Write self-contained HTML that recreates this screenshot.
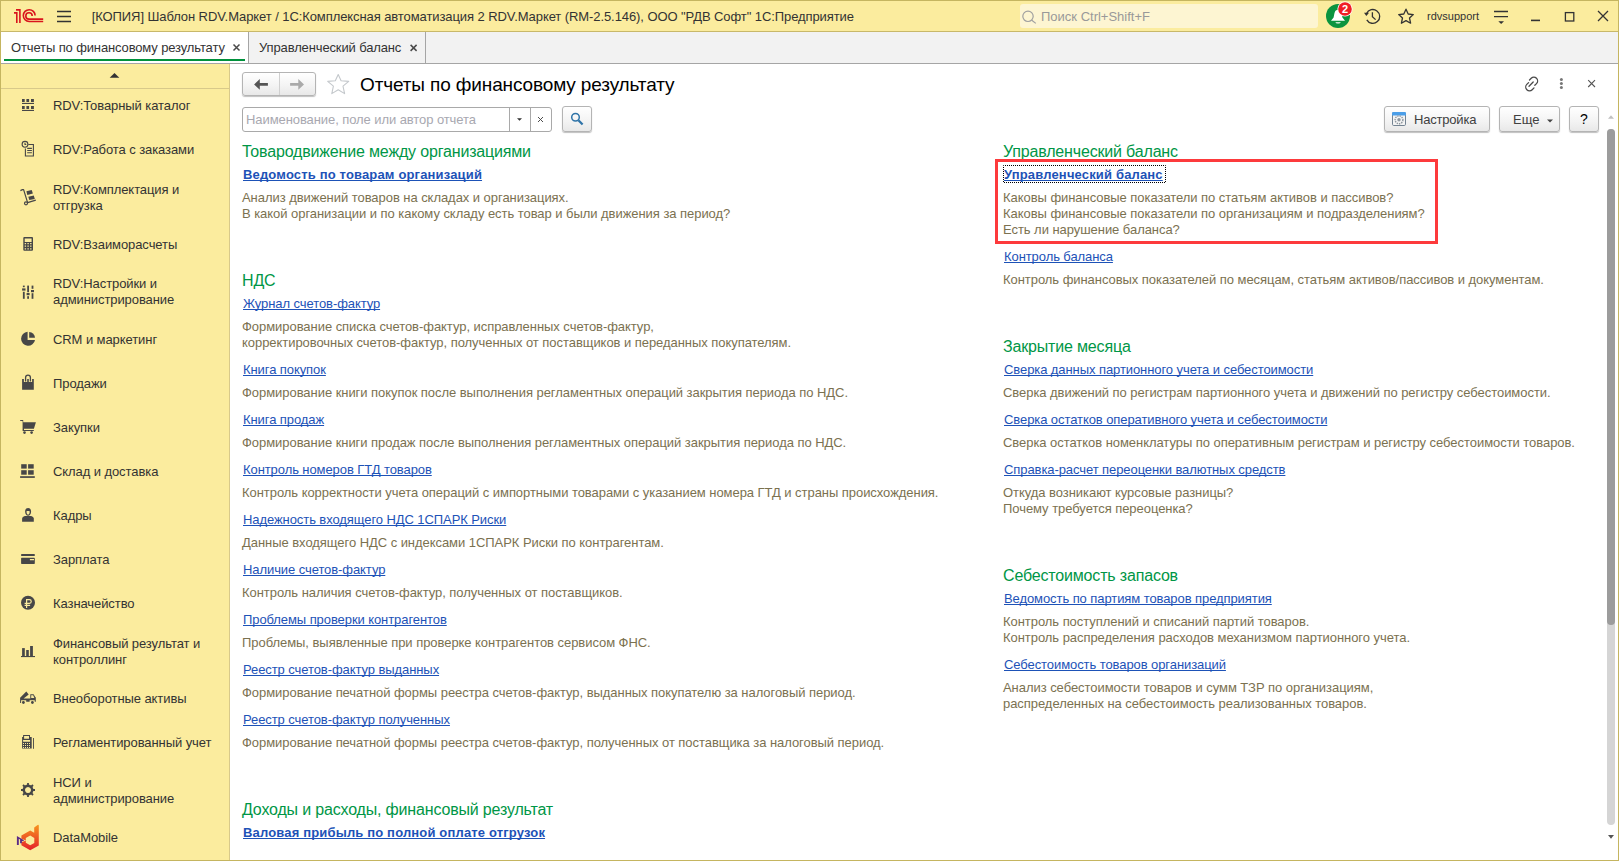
<!DOCTYPE html>
<html><head><meta charset="utf-8">
<style>
*{box-sizing:border-box;margin:0;padding:0}
html,body{width:1619px;height:861px;overflow:hidden;background:#fff}
body{position:relative;font-family:"Liberation Sans",sans-serif;font-size:13px;color:#333}
.a{position:absolute}
.t{position:absolute;white-space:nowrap;line-height:16px}
#frame{left:0;top:0;width:1619px;height:861px;border:1px solid #c5b560}
#titlebar{left:1px;top:1px;width:1617px;height:31px;background:#fbec9e;border-bottom:1px solid #c8b86a}
#tabbar{left:1px;top:32px;width:1617px;height:32px;background:#f2f2f2;border-bottom:1px solid #a5a5a5}
#sidebar{left:1px;top:64px;width:229px;height:796px;background:#fbec9e;border-right:1px solid #d8c98a}
#content{left:230px;top:64px;width:1388px;height:796px;background:#fff}
.side{color:#333;letter-spacing:-0.08px;left:53px}
.h{color:#009646;font-size:16px;line-height:20px;letter-spacing:-0.17px}
.lk{color:#1d52b7;text-decoration:underline;text-decoration-skip-ink:none;letter-spacing:-0.08px}
.lkb{color:#1d52b7;text-decoration:underline;text-decoration-skip-ink:none;font-weight:bold;letter-spacing:0.16px}
.d{color:#7b7150;letter-spacing:-0.05px}
.btn{position:absolute;border:1px solid #b4b4b4;border-radius:3px;background:linear-gradient(#fff,#f3f3f3 60%,#e8e8e8);box-shadow:0 1px 1px rgba(0,0,0,.25)}
</style></head><body>
<div class="a" id="titlebar"></div>
<div class="a" id="tabbar"></div>
<div class="a" id="sidebar"></div>
<div class="a" id="content"></div>
<div class="a" id="frame"></div>

<!-- title bar -->
<div class="t" style="left:91.7px;top:9px;letter-spacing:-0.085px;color:#333">[КОПИЯ] Шаблон RDV.Маркет / 1С:Комплексная автоматизация 2 RDV.Маркет (RM-2.5.146), ООО "РДВ Софт" 1С:Предприятие</div>
<div class="a" style="left:1020px;top:4px;width:298px;height:24px;background:#fdf5d2;border-radius:3px"></div>
<div class="t" style="left:1041px;top:9px;color:#999">Поиск Ctrl+Shift+F</div>
<div class="t" style="left:1427px;top:9px;font-size:11px;line-height:14px;color:#333">rdvsupport</div>

<!-- tabs -->
<div class="a" style="left:1px;top:32px;width:248px;height:31px;background:#fff;border-right:1px solid #a5a5a5"></div>
<div class="a" style="left:4px;top:59px;width:241px;height:2px;background:#00913c"></div>
<div class="t" style="left:11px;top:40px;letter-spacing:-0.13px;color:#333">Отчеты по финансовому результату</div>
<div class="a" style="left:249px;top:32px;width:177px;height:31px;border-right:1px solid #a5a5a5"></div>
<div class="t" style="left:259px;top:40px;letter-spacing:-0.13px;color:#333">Управленческий баланс</div>

<!-- sidebar -->
<div class="a" style="left:1px;top:88px;width:228px;height:1px;background:#d8c98a"></div>
<div class="t side" style="top:98px">RDV:Товарный каталог</div>
<div class="t side" style="top:142px">RDV:Работа с заказами</div>
<div class="t side" style="top:182px">RDV:Комплектация и<br>отгрузка</div>
<div class="t side" style="top:237px">RDV:Взаиморасчеты</div>
<div class="t side" style="top:276px">RDV:Настройки и<br>администрирование</div>
<div class="t side" style="top:332px">CRM и маркетинг</div>
<div class="t side" style="top:376px">Продажи</div>
<div class="t side" style="top:420px">Закупки</div>
<div class="t side" style="top:464px">Склад и доставка</div>
<div class="t side" style="top:508px">Кадры</div>
<div class="t side" style="top:552px">Зарплата</div>
<div class="t side" style="top:596px">Казначейство</div>
<div class="t side" style="top:636px">Финансовый результат и<br>контроллинг</div>
<div class="t side" style="top:691px">Внеоборотные активы</div>
<div class="t side" style="top:735px">Регламентированный учет</div>
<div class="t side" style="top:775px">НСИ и<br>администрирование</div>
<div class="t side" style="top:830px">DataMobile</div>

<!-- content header -->
<div class="t" style="left:360px;top:73px;font-size:19px;line-height:24px;letter-spacing:-0.13px;color:#000">Отчеты по финансовому результату</div>
<div class="btn" style="left:242px;top:72px;width:74px;height:24px"></div>
<div class="a" style="left:279px;top:73px;width:1px;height:22px;background:#d0d0d0"></div>
<div class="a" style="left:242px;top:107px;width:310px;height:25px;border:1px solid #a9a9a9;border-radius:3px;background:#fff"></div>
<div class="a" style="left:509px;top:108px;width:1px;height:23px;background:#a9a9a9"></div>
<div class="a" style="left:530px;top:108px;width:1px;height:23px;background:#a9a9a9"></div>
<div class="t" style="left:246px;top:112px;color:#a8a8b0;letter-spacing:-0.08px">Наименование, поле или автор отчета</div>
<div class="btn" style="left:562px;top:106px;width:30px;height:26px"></div>
<div class="btn" style="left:1384px;top:106px;width:106px;height:26px"></div>
<div class="t" style="left:1414px;top:112px;color:#404040;letter-spacing:-0.2px">Настройка</div>
<div class="btn" style="left:1499px;top:106px;width:61px;height:26px"></div>
<div class="t" style="left:1513px;top:112px;color:#404040">Еще</div>
<div class="btn" style="left:1569px;top:106px;width:30px;height:26px"></div>
<div class="t" style="left:1580px;top:111px;color:#000;font-size:14px">?</div>

<!-- left column -->
<div class="t h" style="left:242px;top:142px">Товародвижение между организациями</div>
<div class="t lkb" style="left:243px;top:167px">Ведомость по товарам организаций</div>
<div class="t d" style="left:242px;top:190px">Анализ движений товаров на складах и организациях.<br>В какой организации и по какому складу есть товар и были движения за период?</div>

<div class="t h" style="left:242px;top:271px">НДС</div>
<div class="t lk" style="left:243px;top:296px">Журнал счетов-фактур</div>
<div class="t d" style="left:242px;top:319px">Формирование списка счетов-фактур, исправленных счетов-фактур,<br>корректировочных счетов-фактур, полученных от поставщиков и переданных покупателям.</div>
<div class="t lk" style="left:243px;top:362px">Книга покупок</div>
<div class="t d" style="left:242px;top:385px">Формирование книги покупок после выполнения регламентных операций закрытия периода по НДС.</div>
<div class="t lk" style="left:243px;top:412px">Книга продаж</div>
<div class="t d" style="left:242px;top:435px">Формирование книги продаж после выполнения регламентных операций закрытия периода по НДС.</div>
<div class="t lk" style="left:243px;top:462px">Контроль номеров ГТД товаров</div>
<div class="t d" style="left:242px;top:485px">Контроль корректности учета операций с импортными товарами с указанием номера ГТД и страны происхождения.</div>
<div class="t lk" style="left:243px;top:512px">Надежность входящего НДС 1СПАРК Риски</div>
<div class="t d" style="left:242px;top:535px">Данные входящего НДС с индексами 1СПАРК Риски по контрагентам.</div>
<div class="t lk" style="left:243px;top:562px">Наличие счетов-фактур</div>
<div class="t d" style="left:242px;top:585px">Контроль наличия счетов-фактур, полученных от поставщиков.</div>
<div class="t lk" style="left:243px;top:612px">Проблемы проверки контрагентов</div>
<div class="t d" style="left:242px;top:635px">Проблемы, выявленные при проверке контрагентов сервисом ФНС.</div>
<div class="t lk" style="left:243px;top:662px">Реестр счетов-фактур выданных</div>
<div class="t d" style="left:242px;top:685px">Формирование печатной формы реестра счетов-фактур, выданных покупателю за налоговый период.</div>
<div class="t lk" style="left:243px;top:712px">Реестр счетов-фактур полученных</div>
<div class="t d" style="left:242px;top:735px">Формирование печатной формы реестра счетов-фактур, полученных от поставщика за налоговый период.</div>

<div class="t h" style="left:242px;top:800px">Доходы и расходы, финансовый результат</div>
<div class="t lkb" style="left:243px;top:825px">Валовая прибыль по полной оплате отгрузок</div>

<!-- right column -->
<div class="t h" style="left:1003px;top:142px">Управленческий баланс</div>
<div class="t lkb" style="left:1004px;top:167px">Управленческий баланс</div>
<div class="t d" style="left:1003px;top:190px">Каковы финансовые показатели по статьям активов и пассивов?<br>Каковы финансовые показатели по организациям и подразделениям?<br>Есть ли нарушение баланса?</div>
<div class="t lk" style="left:1004px;top:249px">Контроль баланса</div>
<div class="t d" style="left:1003px;top:272px">Контроль финансовых показателей по месяцам, статьям активов/пассивов и документам.</div>

<div class="t h" style="left:1003px;top:337px">Закрытие месяца</div>
<div class="t lk" style="left:1004px;top:362px">Сверка данных партионного учета и себестоимости</div>
<div class="t d" style="left:1003px;top:385px">Сверка движений по регистрам партионного учета и движений по регистру себестоимости.</div>
<div class="t lk" style="left:1004px;top:412px">Сверка остатков оперативного учета и себестоимости</div>
<div class="t d" style="left:1003px;top:435px">Сверка остатков номенклатуры по оперативным регистрам и регистру себестоимости товаров.</div>
<div class="t lk" style="left:1004px;top:462px">Справка-расчет переоценки валютных средств</div>
<div class="t d" style="left:1003px;top:485px">Откуда возникают курсовые разницы?<br>Почему требуется переоценка?</div>

<div class="t h" style="left:1003px;top:566px">Себестоимость запасов</div>
<div class="t lk" style="left:1004px;top:591px">Ведомость по партиям товаров предприятия</div>
<div class="t d" style="left:1003px;top:614px">Контроль поступлений и списаний партий товаров.<br>Контроль распределения расходов механизмом партионного учета.</div>
<div class="t lk" style="left:1004px;top:657px">Себестоимость товаров организаций</div>
<div class="t d" style="left:1003px;top:680px">Анализ себестоимости товаров и сумм ТЗР по организациям,<br>распределенных на себестоимость реализованных товаров.</div>

<!-- red highlight box -->
<div class="a" style="left:995px;top:159px;width:443px;height:85px;border:3px solid #fd3a3c"></div>

<!-- scrollbar -->
<div class="a" style="left:1607px;top:129px;width:8px;height:696px;background:#d5d5d5;border-radius:4px"></div>
<div class="a" style="left:1607px;top:129px;width:8px;height:496px;background:#9c9c9c;border-radius:4px"></div>

<svg class="a" style="left:0;top:0" width="1619" height="861" viewBox="0 0 1619 861">
<!-- 1C logo -->
<g fill="none" stroke="#d9141c" stroke-width="1.6">
<path d="M14,12.9 H17 M16.8,12.1 V22.9 M16,9.9 H20.7 M19.9,9.2 V22.9"/>
<path d="M35.1,15.6 A5.9,5.9 0 1 0 29.2,21.5 H43.2"/>
<path d="M32.2,15.9 A3.2,3.2 0 1 0 29,19.1 H43.2"/>
</g>
<!-- hamburger -->
<g stroke="#333" stroke-width="1.5"><path d="M57,11.5 H71 M57,16.5 H71 M57,21.5 H71"/></g>
<!-- search magnifier in title -->
<g fill="none" stroke="#a0a0a0" stroke-width="1.2"><circle cx="1028" cy="16.3" r="5.2"/><path d="M1031.8,20.2 L1035.8,23.4"/></g>
<!-- bell -->
<circle cx="1338" cy="16" r="12" fill="#0b943f"/>
<path d="M1337.2,10 C1335.6,10 1334.8,11.6 1334.4,13.6 L1333.6,17.4 L1331,20.8 H1345 L1342.4,17.4 L1341.6,13.6 C1341.2,11.6 1339,10 1337.2,10 Z" fill="#fff"/>
<path d="M1335.3,22.3 H1340.8 A2.8,1.6 0 0 1 1335.3,22.3 Z" fill="#fff"/>
<circle cx="1345" cy="9" r="7.6" fill="#fff"/>
<circle cx="1345" cy="9" r="6.8" fill="#f01d25"/>
<text x="1345" y="13" font-family="Liberation Sans" font-size="11" font-weight="bold" fill="#fff" text-anchor="middle">2</text>
<!-- history -->
<g fill="none" stroke="#333" stroke-width="1.3">
<path d="M1366.55,13.5 A6.9,6.9 0 1 1 1366.8,19.85"/>
<path d="M1372.4,12.2 V16.6 L1375.6,19.6"/>
</g>
<path d="M1364,12.8 L1369,12.8 L1366.4,16 Z" fill="#333"/>
<!-- star title -->
<path d="M1406,9.2 L1408.2,14 L1413.3,14.6 L1409.5,18 L1410.6,23.2 L1406,20.6 L1401.4,23.2 L1402.5,18 L1398.7,14.6 L1403.8,14 Z" fill="none" stroke="#333" stroke-width="1.3" stroke-linejoin="round"/>
<!-- filter -->
<g stroke="#333" stroke-width="1.3"><path d="M1494,11.5 H1508 M1494,16.6 H1508"/></g>
<path d="M1498.3,21.2 H1504 L1501.15,24 Z" fill="#333"/>
<!-- window controls -->
<path d="M1531,20.4 H1540" stroke="#333" stroke-width="1.6"/>
<rect x="1565.4" y="12.6" width="8.4" height="8.4" fill="none" stroke="#333" stroke-width="1.3"/>
<path d="M1598,11 L1608,21 M1608,11 L1598,21" stroke="#333" stroke-width="1.3"/>
<!-- tab close -->
<path d="M233.5,44.5 L239.5,50.5 M239.5,44.5 L233.5,50.5" stroke="#4a4a4a" stroke-width="1.5"/>
<path d="M410.6,44.9 L416.6,50.9 M416.6,44.9 L410.6,50.9" stroke="#4a4a4a" stroke-width="1.5"/>
<!-- sidebar up arrow -->
<path d="M109.7,77.8 H119.3 L114.5,73 Z" fill="#333"/>

<g fill="#474747">
<!-- 1 grid -->
<rect x="22" y="99" width="2.7" height="3"/><rect x="26.4" y="99" width="2.7" height="3"/><rect x="31" y="99" width="2.9" height="3"/>
<rect x="22" y="102.9" width="12" height="1.1"/>
<rect x="22" y="106" width="2.7" height="3"/><rect x="26.4" y="106" width="2.7" height="3"/><rect x="31" y="106" width="2.9" height="3"/>
<rect x="22" y="109.9" width="12" height="1.1"/>
<!-- 4 calculator -->
<path fill-rule="evenodd" d="M24.3,237 H32 Q33,237 33,238 V249.8 Q33,250.8 32,250.8 H24.3 Q23.3,250.8 23.3,249.8 V238 Q23.3,237 24.3,237 Z M24.7,238.4 V241.9 H31.6 V238.4 Z M24.7,243 h1.4 v1.2 h-1.4 Z M27.4,243 h1.4 v1.2 h-1.4 Z M30.1,243 h1.4 v1.2 h-1.4 Z M24.7,245.6 h1.4 v1.2 h-1.4 Z M27.4,245.6 h1.4 v1.2 h-1.4 Z M30.1,245.6 h1.4 v1.2 h-1.4 Z M24.7,248.2 h1.4 v1.2 h-1.4 Z M27.4,248.2 h1.4 v1.2 h-1.4 Z M30.1,248.2 h1.4 v1.2 h-1.4 Z"/>
<!-- 5 sliders -->
<rect x="22.9" y="285.6" width="1.8" height="1.6"/><rect x="22.1" y="288.4" width="3.4" height="2.2"/><rect x="22.9" y="291.8" width="1.8" height="7"/>
<rect x="27.2" y="285.6" width="1.8" height="6.6"/><rect x="26.6" y="293" width="3" height="2.2"/><rect x="27.2" y="296.2" width="1.8" height="2.6"/>
<rect x="31.6" y="285.6" width="1.8" height="3.2"/><rect x="31" y="290" width="3" height="2.2"/><rect x="31.6" y="293.2" width="1.8" height="5.6"/>
<!-- 6 pie -->
<path d="M27.6,339.9 V331.85 A7,7 0 1 0 35,339.9 Z"/>
<path d="M29.2,337.8 V331.9 A5.9,5.9 0 0 1 35,337.8 Z"/>
<!-- 7 bag -->
<path d="M22.1,379 H23.9 V382 H27.2 V379 H28.8 V382 H32.1 V379 H33.8 V389.8 H22.1 Z"/>
<path d="M25.6,381.5 V377.6 A2.4,2.4 0 0 1 30.4,377.6 V381.5" fill="none" stroke="#474747" stroke-width="1.3"/>
<!-- 8 cart -->
<path d="M20.2,420 H23.2 V422.3 H35.9 L33.9,428.8 H24 V430 H33.8 V431.1 H22.6 V421.1 H20.2 Z"/>
<circle cx="24.5" cy="432.6" r="1.3"/><circle cx="31.6" cy="432.6" r="1.3"/>
<!-- 9 warehouse -->
<rect x="21.2" y="464.2" width="5.5" height="4.4"/><rect x="28.1" y="464.2" width="5.6" height="4.4"/>
<rect x="21.2" y="470.2" width="5.5" height="4.5"/><rect x="28.1" y="470.2" width="5.6" height="4.5"/>
<rect x="20.1" y="476.2" width="14.7" height="1.7"/>
<!-- 10 person -->
<path fill-rule="evenodd" d="M28.1,508 C30.2,508 31.1,509.6 31.1,511.6 C31.1,514 29.8,515.8 28.1,515.8 C26.4,515.8 25.1,514 25.1,511.6 C25.1,509.6 26,508 28.1,508 Z M26.5,511.2 C26.5,513.4 27.2,514.6 28.1,514.6 C29,514.6 29.7,513.4 29.7,511.2 C28.6,511 27.6,510.6 26.5,511.2 Z"/>
<path d="M22.1,521.8 V518.6 Q22.2,516.6 24.8,516.1 H31.2 Q33.7,516.6 33.8,518.6 V521.8 Z"/>
<!-- 11 card -->
<rect x="21.1" y="554" width="13.7" height="2" rx="0.6"/>
<path fill-rule="evenodd" d="M21.7,557.8 H34.2 Q34.8,557.8 34.8,558.4 V563.3 Q34.8,563.9 34.2,563.9 H21.7 Q21.1,563.9 21.1,563.3 V558.4 Q21.1,557.8 21.7,557.8 Z M29.9,559 V560.2 H34 V559 Z"/>
<!-- 12 ruble -->
<circle cx="28" cy="602.8" r="7"/>
<!-- 13 bars -->
<rect x="22.1" y="648.1" width="2.7" height="8.1"/><rect x="26.2" y="650" width="2.6" height="6.2"/><rect x="30.1" y="646" width="2.8" height="10.2"/>
<rect x="21" y="656" width="14" height="1.1"/>
<!-- 14 truck -->
<path d="M20.1,697.8 L26.3,691.4 L28.7,694.6 L23.6,698.4 H30.3 V694.2 H33.6 L35.1,696.8 L35.8,697.4 V701.8 H34.7 V700.3 H29.6 V701.7 H26.2 V700.3 H21.1 V703 H20.1 Z"/>
<circle cx="23.4" cy="702.5" r="1.4"/><circle cx="32.4" cy="702.5" r="1.4"/>
<path d="M31.2,695.2 H33.2 L34.3,697.9 H31.2 Z" fill="#fbec9e"/>
<!-- 15 fiscal -->
<path fill-rule="evenodd" d="M23.1,735 H30 V737 H31.7 V748.6 H22.1 V737 H23.1 Z M24.1,736 V738.8 H29 V736 Z M23.1,740 V741.8 H30.1 V740 Z M23,743 h1 v1 h-1 Z M25,743 h1 v1 h-1 Z M27,743 h1 v1 h-1 Z M29,743 h1 v1 h-1 Z M23,745 h1 v1 h-1 Z M25,745 h1 v1 h-1 Z M27,745 h1 v1 h-1 Z M29,745 h1 v1 h-1 Z M23,747 h1 v1 h-1 Z M25,747 h1 v1 h-1 Z M27,747 h1 v1 h-1 Z M29,747 h1 v1 h-1 Z"/>
<rect x="33" y="738" width="0.9" height="10.8"/>
<!-- 16 gear -->
<path fill-rule="evenodd" d="M28,784.6 A5.4,5.4 0 1 1 27.99,784.6 Z M28,787 A3,3 0 1 0 28.01,787 Z"/>
<g stroke="#474747" stroke-width="1.8">
<path d="M28,783 V786 M28,794 V797 M21,790 H24 M32,790 H35 M23,785 L25,787 M31,793 L33,795 M33,785 L31,787 M25,793 L23,795"/>
</g>
</g>
<!-- ruble glyph -->
<path d="M26.6,608 V599.6 H29.4 A1.8,1.8 0 0 1 29.4,603.3 H24.6 M24.6,605.4 H30.1" fill="none" stroke="#fbec9e" stroke-width="1.2"/>
<!-- 2 clock doc -->
<g fill="none" stroke="#474747" stroke-width="1.1">
<circle cx="25" cy="144.3" r="2.9"/>
<path d="M25,142.8 V144.5 H26.3"/>
<path d="M28.3,144.5 H33.4 V156 H25.4 V148.6"/>
<path d="M27.2,148.4 H31.9 M27.2,150.5 H31.9 M27.2,152.8 H31.9"/>
</g>
<!-- 3 hand truck -->
<g fill="none" stroke="#474747" stroke-width="1.2" stroke-linejoin="round">
<path d="M20.4,190.6 L22.4,189.6 H23.6 L27.6,202.6 L35.8,200.2"/>
<circle cx="26" cy="203.3" r="1.5"/>
</g>
<g fill="#474747">
<path d="M26.4,191.3 L31.7,190 L32.9,193.6 L27.3,194.9 Z"/>
<path d="M28.3,196.7 L33.8,195.4 L34.8,198.9 L29.3,200.1 Z"/>
</g>
<!-- DataMobile -->
<defs><linearGradient id="dmg" x1="0" y1="0" x2="0" y2="1"><stop offset="0" stop-color="#f7941d"/><stop offset="1" stop-color="#e4202a"/></linearGradient></defs>
<path fill="url(#dmg)" fill-rule="evenodd" d="M21.4,835.6 L30.2,830.5 L34.2,832.8 V827.4 L37.6,824.9 Q38.8,824.5 38.8,825.8 V845.6 L30.2,850.3 L21.4,845.3 Z M25.8,837.9 V842.8 L30.2,845.3 L34.3,842.9 V837.9 L30.2,835.5 Z"/>
<path d="M20.6,838.6 L26.2,840.4 L20.6,842.4 Z" fill="#fbec9e"/>
<path d="M16.9,835.9 L24.4,840.4 L21.9,841.3 V843.2 H20.1 V839.5 L18.8,838.7 V844.9 H16.9 Z" fill="#5b2b86"/>
<!-- nav arrows -->
<path d="M254.1,84.4 L259.8,79.1 V83 H267.9 V85.8 H259.8 V89.8 Z" fill="#555"/>
<path d="M304,84.4 L298.3,79.1 V83 H290.1 V85.8 H298.3 V89.8 Z" fill="#aaa"/>
<!-- content star -->
<path d="M338.2,74.5 L341.1,80.7 L348.7,81.4 L343,86.2 L344.6,93.6 L338.2,89.7 L331.8,93.6 L333.4,86.2 L327.7,81.4 L335.3,80.7 Z" fill="none" stroke="#c4c8cc" stroke-width="1.1" stroke-linejoin="round"/>
<!-- search field icons -->
<path d="M517,118.2 H522 L519.5,120.8 Z" fill="#333"/>
<path d="M538,117 L543,122 M543,117 L538,122" stroke="#444" stroke-width="0.95"/>
<g fill="none" stroke="#2f74a8"><circle cx="575.5" cy="117.2" r="3.8" stroke-width="1.5"/><path d="M578.4,120.2 L582.6,124.6" stroke-width="2.2"/></g>
<!-- content top-right icons -->
<g fill="none" stroke="#4a4a4a" stroke-width="1.3" stroke-linecap="round">
<path d="M1529.5,80 L1531.2,78.3 A2.8,2.8 0 0 1 1536.5,83.6 L1534.8,85.3"/>
<path d="M1528.6,82.6 L1526.8,84.4 A2.8,2.8 0 0 0 1532.2,89.7 L1534,87.9"/>
<path d="M1529,86.2 L1533.2,82"/>
</g>
<g fill="#777"><circle cx="1561.4" cy="79.5" r="1.5"/><circle cx="1561.4" cy="83.5" r="1.5"/><circle cx="1561.4" cy="87.6" r="1.5"/></g>
<path d="M1588.2,80.2 L1595,87 M1595,80.2 L1588.2,87" stroke="#555" stroke-width="1.1"/>
<!-- nastroika icon -->
<rect x="1392.5" y="112.5" width="13" height="13" rx="1.2" fill="#f4f4f4" stroke="#738392" stroke-width="1"/>
<path d="M1392,115.6 V113.2 Q1392,112 1393.2,112 H1404.8 Q1406,112 1406,113.2 V115.6 Z" fill="#4b9ee8"/>
<circle cx="1399" cy="119.8" r="3.9" fill="none" stroke="#8e979f" stroke-width="1.4" stroke-dasharray="1.4 0.9"/>
<circle cx="1399" cy="119.8" r="1.7" fill="#8e979f"/>
<!-- eshe triangle -->
<path d="M1547,119.4 H1553 L1550,122.4 Z" fill="#444"/>
<!-- scroll arrows -->
<path d="M1608,118.7 H1614 L1611,115.2 Z" fill="#c0c0c0"/>
<path d="M1608,835 H1614 L1611,838.7 Z" fill="#555"/>
<!-- focus dotted rect -->
<rect x="1003.5" y="165.5" width="162" height="17" fill="none" stroke="#000" stroke-width="1" stroke-dasharray="1 1" stroke-dashoffset="0.5"/>
</svg>
</body></html>
